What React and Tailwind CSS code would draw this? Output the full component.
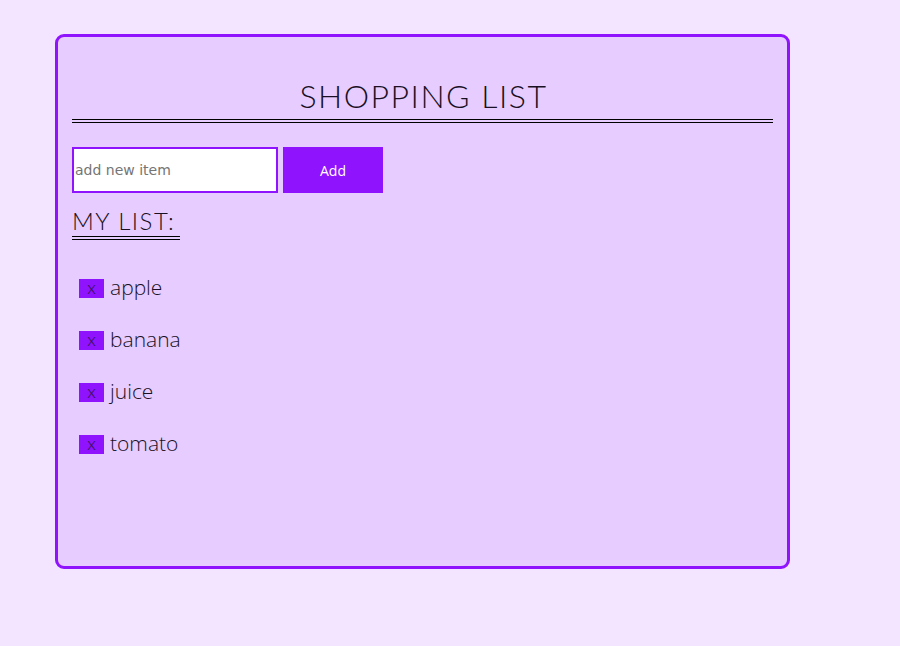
import React, { useState } from 'react';

const items = ['apple', 'banana', 'juice', 'tomato'];

export default function App() {
  const [list] = useState(items);

  return (
    <div className="min-h-[646px] w-[900px] bg-[#f3e5ff] pt-[34px] pl-[55px]" style={{ fontFamily: 'Lato, "Open Sans", sans-serif' }}>
      <div className="w-[735px] h-[535px] rounded-[9px] border-[3px] border-[#9013fe] bg-[#e6ccff] px-[14px] pt-[38px]">
        {/* Title */}
        <h1 className="text-center text-[32px] font-light tracking-[1.5px] leading-[42px] text-[#1a1024] border-b-[4px] border-double border-black pb-[2px] pl-[2px]">
          SHOPPING LIST
        </h1>

        {/* Add form */}
        <div className="mt-[24px] flex gap-[5px]">
          <input
            placeholder="add new item"
            className="w-[206px] h-[46px] border-2 border-[#9013fe] bg-white px-[1px] text-[14px] text-[#333] placeholder:text-[#757575] outline-none"
            style={{ fontFamily: '"DejaVu Sans", "Open Sans", sans-serif' }}
          />
          <button
            className="w-[100px] h-[46px] bg-[#9013fe] text-white text-[14px]"
            style={{ fontFamily: '"Open Sans", sans-serif' }}
          >
            Add
          </button>
        </div>

        {/* My list heading */}
        <div className="mt-[12px]">
          <h2 className="inline-block text-[24px] font-light tracking-[1.5px] leading-[31px] text-[#1a1024] border-b-[4px] border-double border-black pr-[5px]">
            MY LIST:
          </h2>
        </div>

        {/* Items */}
        <ul className="mt-[37px] flex flex-col gap-[30px] pl-[7px]">
          {list.map((item) => (
            <li key={item} className="flex items-center gap-[6px] h-[22px]">
              <span className="w-[25px] h-[19px] bg-[#9013fe] flex items-center justify-center text-[18px] leading-none font-light text-[#2a1040] pb-[2px]">
                x
              </span>
              <span className="text-[21px] font-light text-[#1a1024]" style={{ fontFamily: '"Open Sans", Lato, sans-serif' }}>{item}</span>
            </li>
          ))}
        </ul>
      </div>
    </div>
  );
}
